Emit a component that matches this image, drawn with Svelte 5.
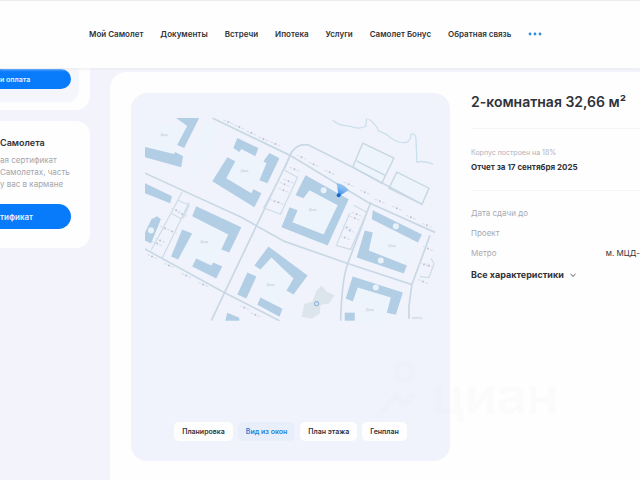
<script lang="ts">
  const links = ['Мой Самолет', 'Документы', 'Встречи', 'Ипотека', 'Услуги', 'Самолет Бонус', 'Обратная связь']
  const tabs = ['Планировка', 'Вид из окон', 'План этажа', 'Генплан']
  let activeTab = $state('Вид из окон')

  const specs = [
    { name: 'Дата сдачи до', value: '' },
    { name: 'Проект', value: '' },
    { name: 'Метро', value: 'м. МЦД-' },
  ]

  const yards = [
    '146,120 178,126 187,129 178,145 184,156 146,147',
    '238,150 267,163 260,180 254,189 227,178 236,160',
    '199,218 229,232 217,264 192,258 183,256 193,232',
    '310,190 338,205 324,234 293,222',
    '373,222 418,242 407,265 369,250',
    '272,257 294,278 281,307 261,297 257,276',
    '358,287 391,297 386,320 352,320',
    '207,119 220,124 204,168 191,178 193,148',
  ]

  const buildings = [
    '177,118 200,118 185,148 178,145 188,126',
    '146,147 175,154 176,152 184,156 182,167 146,157',
    '238,138 259,148 256,156 242,149 240,152 234,148',
    '270,153 280,158 268,183 260,180 267,163 264,161',
    '228,157 236,161 227,178 252,193 254,189 262,193 255,207 213,181',
    '146,183 173,196 171,203 146,193',
    '197,206 242,227 230,252 222,249 229,234 193,216',
    '183,229 193,233 179,259 172,256',
    '197,258 212,265 214,262 223,266 217,278 193,266',
    '153,218 161,221 152,243 146,240 146,232',
    '269,246 308,275 294,294 287,290 294,278 272,257 261,269 255,265',
    '248,272 257,276 247,298 238,294',
    '261,297 283,308 280,316 258,304',
    '228,312 240,317 240,320 226,320',
    '306,175 349,199 328,245 282,227 290,207 298,210 293,222 324,234 338,205 310,190 304,198 296,195',
    '373,210 422,234 418,242 372,219',
    '365,230 373,232 369,250 407,265 404,273 357,257',
    '353,276 403,292 396,314 387,312 391,297 358,287 353,301 346,298',
    '345,312 355,312 355,320 345,320',
    '154,218 158,216 162,219 160,222',
  ]

  const roads = [
    'M213 118 290 155 368 202 435 232',
    'M285 168 292 152Q299 143 309 145L353 167 422 204',
    'M146 173 242 217 285 241 348 263 412 284',
    'M145 248 223 291 280 320',
    'M290 157 262 215 212 320',
    'M371 202 348 263Q342 280 341 320',
    'M430 235 412 284 409 306 409 318',
  ]

  const lanes = [
    'M183 192 152 250M190 202 163 258M179 200 190 205 184 218M172 213 183 219',
    'M285 170 298 177 281 214 265 208M280 178 264 208',
    'M354 205 367 212 351 249 336 245M350 213 337 244',
    'M431 258 434 263 429 277 420 276',
  ]

  const plots = ['363,143 394,158 382,183 353,167', '397,172 429,188 422,204 389,188']

  const labels = [
    [165, 136],
    [245, 172],
    [205, 243],
    [271, 285],
    [313, 211],
    [392, 247],
    [370, 310],
  ]

  const badges = [
    [324, 190],
    [396, 226],
    [381, 260],
    [376, 287],
    [152, 230],
  ]

  const cars = [
    [229, 122], [240, 127], [252, 133], [264, 139], [276, 144],
    [302, 157], [314, 164], [330, 172], [349, 184], [365, 192], [380, 201], [397, 208], [411, 217], [427, 225],
    [166, 228], [158, 243], [173, 231], [161, 240], [177, 210], [183, 214],
    [285, 184], [289, 181], [275, 201], [279, 202], [284, 190],
    [347, 227], [345, 237], [355, 218], [350, 230], [357, 214],
    [153, 256], [170, 265], [187, 275], [204, 284], [245, 307], [256, 314],
    [424, 264], [429, 265], [428, 248], [423, 281], [295, 169],
  ]
</script>

<div class="page">
  <header>
    <nav aria-label="Разделы">
      {#each links as link}
        <a href="#top">{link}</a>
      {/each}
      <button class="more" aria-label="Ещё">
        <svg viewBox="0 0 14 4" aria-hidden="true">
          <circle cx="2" cy="2" r="1.4" />
          <circle cx="7" cy="2" r="1.4" />
          <circle cx="12" cy="2" r="1.4" />
        </svg>
      </button>
    </nav>
  </header>

  <div class="layout">
    <aside>
      <section class="side-card payment">
        <div class="inner">
          <button class="primary">и оплата</button>
        </div>
      </section>
      <section class="side-card certificate">
        <h2>Самолета</h2>
        <p>ая сертификат<br />Самолетах, часть<br />у вас в кармане</p>
        <button class="primary large">тификат</button>
      </section>
    </aside>

    <main>
      <section class="viewer">
        <svg class="map" viewBox="146 118 290 202" role="img" aria-label="Вид из окон на карте">
          {#each yards as points}
            <polygon class="yard" {points} />
          {/each}
          {#each plots as points}
            <polygon class="plot" {points} />
          {/each}
          <path class="plot" d="M357 161 385 175" />
          <path class="river" d="M333 120Q339 126 350 126 360 130 366 126L367 118M369 119Q376 124 379 131 386 133 391 138 400 144 407 142 411 140 411 134 415 133 416 138L417 162Q424 160 433 164" />
          {#each roads as d}
            <path class="road" {d} />
          {/each}
          {#each lanes as d}
            <path class="lane" {d} />
          {/each}
          <path class="park" d="M317 290 322 285 327 291 335 295 329 303 321 304 320 313 312 318 302 316 305 303 313 301Z" />
          {#each buildings as points}
            <polygon class="building" {points} />
          {/each}
          {#each badges as [x, y]}
            <circle class="badge" cx={x} cy={y} r="3" />
          {/each}
          {#each cars as [x, y]}
            <circle class="car" cx={x} cy={y} r="1" />
            <path class="kerb" d="M{x - 5} {y - 2}l3 1M{x + 2} {y + 1}l3 1" />
          {/each}
          {#each labels as [x, y]}
            <text {x} {y}>Двор</text>
          {/each}
          <text x="417" y="318">проезд</text>
          <circle class="pin" cx="317" cy="303" r="2" />
          <defs>
            <linearGradient id="beam" x1="0" y1="1" x2="0.4" y2="0">
              <stop offset="0" stop-color="#1c78e6" />
              <stop offset="1" stop-color="#7fbdf2" stop-opacity="0.6" />
            </linearGradient>
          </defs>
          <path fill="url(#beam)" d="M339 196 337 183Q344 183 349 190Z" />
          <circle class="eye" cx="339" cy="195" r="2" />
        </svg>

        <div class="tabs">
          {#each tabs as tab}
            <button class:active={tab === activeTab} onclick={() => (activeTab = tab)}>{tab}</button>
          {/each}
        </div>
      </section>

      <section class="details">
        <h1>2-комнатная 32,66 м²</h1>
        <div class="report">
          <p>Корпус построен на 18%</p>
          <a href="#report">Отчет за 17 сентября 2025</a>
        </div>
        <dl>
          {#each specs as spec}
            <div>
              <dt>{spec.name}</dt>
              <dd>{spec.value}</dd>
            </div>
          {/each}
        </dl>
        <button class="all">
          Все характеристики
          <svg viewBox="0 0 8 8" aria-hidden="true"><path d="M1.5 3 4 5.4 6.5 3" /></svg>
        </button>
      </section>

      <div class="watermark" aria-hidden="true">
        <svg viewBox="0 0 50 64">
          <circle cx="30" cy="12" r="8" />
          <path d="M4 56 22 36 30 44 40 34" />
        </svg>
        <span>циан</span>
      </div>
    </main>
  </div>
</div>

<style>
  :global(body) {
    margin: 0;
    background: #f3f4fb;
  }

  .page {
    display: flex;
    flex-direction: column;
    min-height: 100vh;
    overflow: hidden;
    color: #30323a;
    font-family: Inter, 'Liberation Sans', sans-serif;
  }

  h1,
  h2,
  p,
  dl,
  dd {
    margin: 0;
  }

  a {
    color: inherit;
    text-decoration: none;
  }

  button {
    border: 0;
    padding: 0;
    background: none;
    color: inherit;
    font: inherit;
    cursor: pointer;
  }

  header {
    position: relative;
    box-sizing: border-box;
    height: 68px;
    border-top: 1px solid #ececf0;
    background: #fefefe;
    box-shadow: 0 1px 3px #e9e9f0;
  }

  nav {
    display: flex;
    align-items: center;
    gap: 17px;
    height: 66px;
    padding-left: 89px;
    font-size: 8px;
    font-weight: 600;
    white-space: nowrap;
  }

  .more {
    display: flex;
  }

  .more svg {
    width: 14px;
    height: 4px;
    fill: #2f8de4;
  }

  .layout {
    display: grid;
    flex: 1;
    grid-template-columns: 90px minmax(0, 1fr);
    gap: 20px;
  }

  aside {
    display: flex;
    flex-direction: column;
    gap: 11px;
  }

  .side-card {
    border-radius: 0 14px 14px 0;
    background: #fefefe;
    white-space: nowrap;
  }

  .payment {
    padding: 0 11px 8px 0;
    border-top-right-radius: 0;
  }

  .inner {
    padding: 1px 8px 13px 0;
    border-radius: 0 0 12px 0;
    background: #f5f6fb;
  }

  .primary {
    display: block;
    width: 100%;
    height: 20px;
    border-radius: 0 10px 10px 0;
    background: #087bfb;
    color: #e8f2ff;
    font-size: 7px;
    font-weight: 600;
    text-align: left;
  }

  .primary.large {
    height: 25px;
    border-radius: 0 13px 13px 0;
    font-size: 8px;
  }

  .certificate {
    padding: 15px 19px 19px 0;
  }

  h2 {
    font-size: 9px;
    font-weight: 600;
    line-height: 14px;
  }

  .certificate p {
    margin: 4px 0 14px;
    color: #a3a5ac;
    font-size: 8px;
    line-height: 12px;
  }

  main {
    position: relative;
    display: grid;
    grid-template-columns: 319px minmax(0, 1fr);
    align-items: start;
    gap: 21px;
    margin-top: 4px;
    padding: 21px 0 19px 21px;
    border-radius: 16px 0 0 0;
    background: #fefefe;
  }

  .viewer {
    display: flex;
    flex-direction: column;
    align-items: center;
    justify-content: space-between;
    box-sizing: border-box;
    aspect-ratio: 319 / 368;
    padding: 25px 14px 20px;
    border-radius: 16px;
    background: #f1f3fc;
  }

  .map {
    width: 100%;
  }

  .yard {
    fill: #edf4fc;
  }

  .plot {
    fill: #eef4fb;
    stroke: #c6d7e3;
    stroke-width: 1.4;
  }

  .river {
    fill: none;
    stroke: #cbdfec;
    stroke-width: 1.3;
  }

  .road {
    fill: none;
    stroke: #c9d8e5;
    stroke-width: 1.7;
  }

  .lane {
    fill: none;
    stroke: #cedce7;
    stroke-width: 1.2;
  }

  .building {
    fill: #b2cee5;
  }

  .park {
    fill: #dce5ec;
  }

  .badge {
    fill: #e9f1f9;
  }

  .car {
    fill: #b9c0d2;
  }

  .kerb {
    stroke: #d8dfe9;
    stroke-width: 1;
  }

  .pin {
    fill: none;
    stroke: #8db2d2;
  }

  .eye {
    fill: #1769cf;
  }

  .map text {
    fill: #b7c9d9;
    font-size: 3px;
    text-anchor: middle;
  }

  .tabs {
    display: flex;
    gap: 5px;
  }

  .tabs button {
    height: 19px;
    padding: 0 8px;
    border-radius: 5px;
    background: #fefefe;
    font-size: 7px;
    font-weight: 600;
    white-space: nowrap;
  }

  .tabs .active {
    background: #e9eefb;
    color: #2b7fd6;
  }

  .details {
    white-space: nowrap;
  }

  h1 {
    padding-bottom: 17px;
    border-bottom: 1px solid #f5f5f7;
    font-size: 14px;
    font-weight: 600;
    line-height: 18px;
  }

  .report {
    padding: 17px 0 16px;
    border-bottom: 1px solid #f5f5f7;
    font-size: 8px;
    font-weight: 700;
    line-height: 14px;
  }

  .report p {
    color: #b0b2b9;
    font-size: 7px;
    font-weight: 400;
  }

  .report a {
    display: block;
  }

  dl {
    display: grid;
    gap: 6px;
    padding: 15px 0 8px;
    font-size: 8px;
    line-height: 14px;
  }

  dl div {
    display: flex;
    justify-content: space-between;
  }

  dt {
    color: #a8aab2;
  }

  .all {
    display: flex;
    align-items: center;
    gap: 5px;
    font-size: 9px;
    font-weight: 700;
    line-height: 14px;
  }

  .all svg {
    width: 8px;
    height: 8px;
    fill: none;
    stroke: #565860;
  }

  .watermark {
    position: absolute;
    bottom: 56px;
    left: 264px;
    display: flex;
    align-items: flex-end;
    gap: 8px;
    color: #88889a;
    font-size: 52px;
    font-weight: 600;
    line-height: 56px;
    opacity: 0.014;
    pointer-events: none;
  }

  .watermark svg {
    width: 50px;
    height: 64px;
    fill: none;
    stroke: currentColor;
    stroke-width: 6;
  }
</style>
